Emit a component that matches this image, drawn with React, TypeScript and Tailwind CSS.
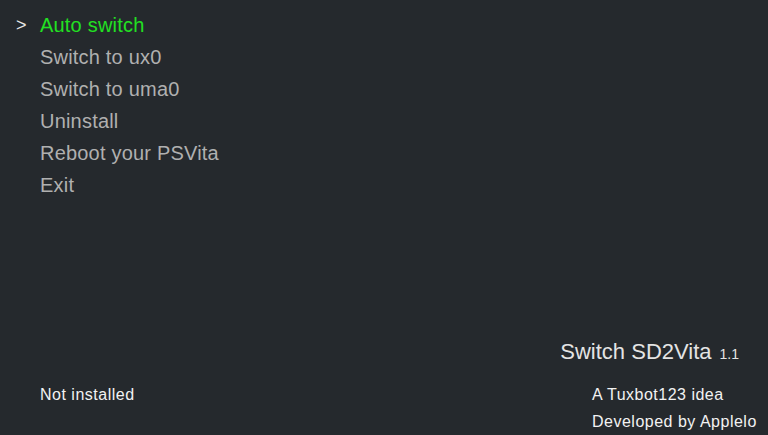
import React from "react";

const items = ["Auto switch", "Switch to ux0", "Switch to uma0", "Uninstall", "Reboot your PSVita", "Exit"];

export default function App() {
  return (
    <div
      className="w-[768px] h-[435px] bg-[#25292d] flex flex-col overflow-hidden"
      style={{ fontFamily: '"Liberation Sans", Arial, sans-serif' }}
    >
      <div className="pt-[9px] flex flex-col">
        {items.map((t, i) => (
          <div key={t} className="flex items-center h-[32px] text-[20px] tracking-[0.2px]">
            <span className="w-[40px] pl-[16px] text-[#e8e8e8] text-[18px]">{i === 0 ? ">" : ""}</span>
            <span className={i === 0 ? "text-[#22e022]" : "text-[#b0b0b0]"}>{t}</span>
          </div>
        ))}
      </div>
      <div className="flex-1" />
      <div className="flex justify-end items-baseline pr-[29px] h-[26px] leading-[26px] text-[#e4e4e4]">
        <span className="text-[22px]">Switch SD2Vita</span>
        <span className="text-[14px] ml-[8px]">1.1</span>
      </div>
      <div className="flex justify-between items-start pt-[16px] text-[16px] tracking-[0.5px] text-[#f2f2f2]">
        <span className="pl-[40px] leading-[27px]">Not installed</span>
        <div className="flex flex-col w-[176px] leading-[27px]">
          <span>A Tuxbot123 idea</span>
          <span>Developed by Applelo</span>
        </div>
      </div>
    </div>
  );
}
